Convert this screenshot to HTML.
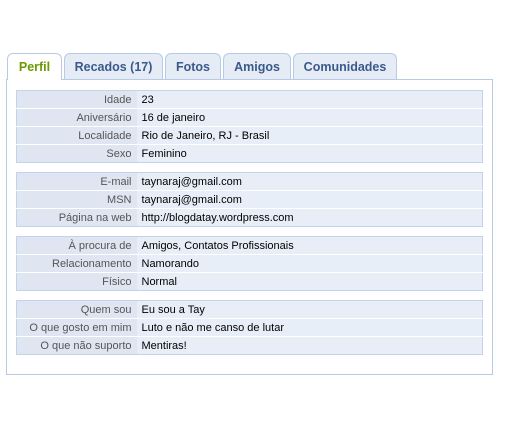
<!DOCTYPE html>
<html><head><meta charset="utf-8"><style>
*{margin:0;padding:0;box-sizing:border-box}
body{width:509px;height:425px;background:#fff;font-family:"Liberation Sans",Arial,sans-serif;font-size:11px;position:relative;overflow:hidden}
.tab{position:absolute;top:53px;height:27px;border:1px solid #b8cbe6;border-bottom:none;border-radius:6px 6px 0 0;background:#e6ecf6;color:#3b5a8a;font-weight:bold;font-size:12.5px;text-align:center;line-height:27px}
.tab.act{background:#fff;color:#6a9a00;height:27px;z-index:2}
.panel{position:absolute;left:6px;top:79px;width:487px;height:296px;border:1px solid #b8cbe6;background:#fff}
table{position:absolute;left:16px;width:467px;border:1px solid #c3d3ea;border-collapse:collapse}
td{height:18px;border-bottom:1px solid #fff;padding:1px 5px 0;line-height:16px;white-space:nowrap}
tr:last-child td{border-bottom:none;height:17px}
td.l{width:120px;text-align:right;background:#dfe5f1;color:#555}
td.v{background:#e8eef8;color:#000}
</style></head><body>
<div class="tab act" style="left:7px;width:55px">Perfil</div>
<div class="tab" style="left:64px;width:99px">Recados (17)</div>
<div class="tab" style="left:165px;width:56px">Fotos</div>
<div class="tab" style="left:223px;width:68px">Amigos</div>
<div class="tab" style="left:293px;width:104px">Comunidades</div>
<div class="panel"></div>
<table style="top:90px"><tr><td class="l">Idade</td><td class="v">23</td></tr><tr><td class="l">Aniversário</td><td class="v">16 de janeiro</td></tr><tr><td class="l">Localidade</td><td class="v">Rio de Janeiro, RJ - Brasil</td></tr><tr><td class="l">Sexo</td><td class="v">Feminino</td></tr></table>
<table style="top:172px"><tr><td class="l">E-mail</td><td class="v">taynaraj@gmail.com</td></tr><tr><td class="l">MSN</td><td class="v">taynaraj@gmail.com</td></tr><tr><td class="l">Página na web</td><td class="v">http://blogdatay.wordpress.com</td></tr></table>
<table style="top:236px"><tr><td class="l">À procura de</td><td class="v">Amigos, Contatos Profissionais</td></tr><tr><td class="l">Relacionamento</td><td class="v">Namorando</td></tr><tr><td class="l">Físico</td><td class="v">Normal</td></tr></table>
<table style="top:300px"><tr><td class="l">Quem sou</td><td class="v">Eu sou a Tay</td></tr><tr><td class="l">O que gosto em mim</td><td class="v">Luto e não me canso de lutar</td></tr><tr><td class="l">O que não suporto</td><td class="v">Mentiras!</td></tr></table>
</body></html>
